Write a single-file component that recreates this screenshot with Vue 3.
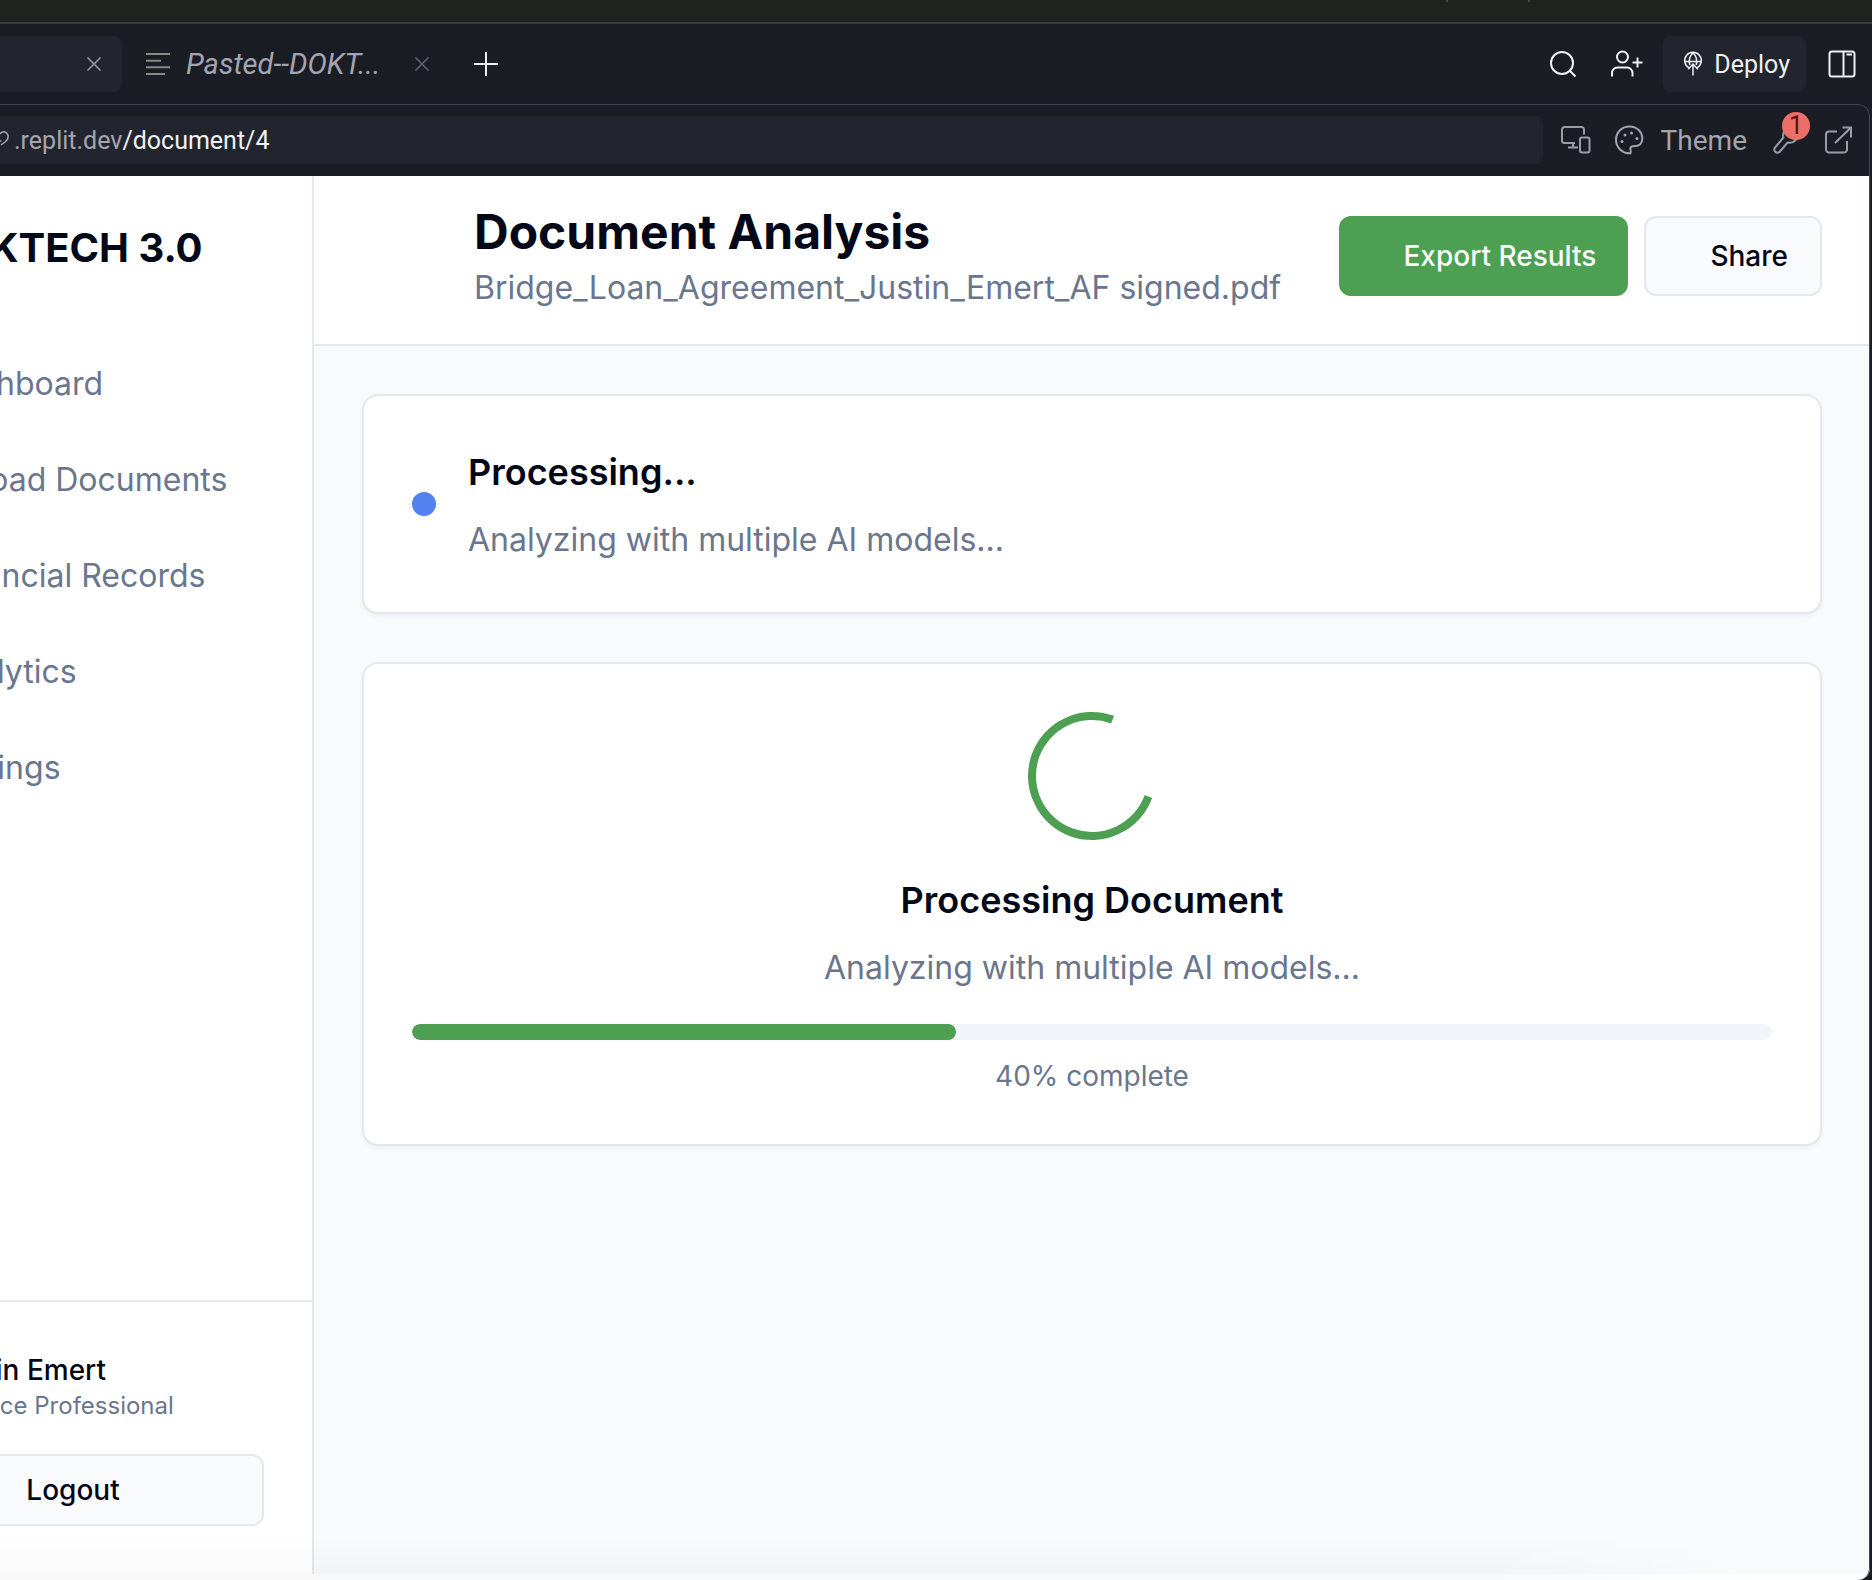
<script setup>
import { ref } from 'vue'

const progress = ref(40)
const statusText = 'Analyzing with multiple AI models...'
const navItems = ['Dashboard', 'Upload Documents', 'Financial Records', 'Analytics', 'Settings']
</script>

<template>
  <div class="app">
    <div class="window-strip"><i></i><i></i></div>

    <header class="tabbar">
      <div class="tab active">
        <button class="bare" aria-label="Close tab">
          <svg width="14" height="14" viewBox="0 0 14 14"><path d="M0.5 0.5l13 13M13.5 0.5l-13 13" /></svg>
        </button>
      </div>
      <div class="tab pasted">
        <svg class="file-icon" width="24" height="24" viewBox="0 0 24 24"><path d="M0 2h24M0 8.700h15M0 15.300h24M0 22h19" /></svg>
        <span class="tab-title">Pasted--DOKT...</span>
        <button class="bare dim" aria-label="Close tab">
          <svg width="14" height="14" viewBox="0 0 14 14"><path d="M0.500 0.500l13 13M13.500 0.500l-13 13" /></svg>
        </button>
      </div>
      <button class="bare bright" aria-label="New tab">
        <svg class="thick" width="24" height="24" viewBox="0 0 24 24"><path d="M12 0v24M0 12h24" /></svg>
      </button>
      <div class="tab-actions">
        <button class="bare bright search" aria-label="Search">
          <svg class="thick" width="26" height="26" viewBox="0 0 26 26"><circle cx="12" cy="12" r="11" /><path d="M19.800 19.800l5.700 5.700" /></svg>
        </button>
        <button class="bare bright invite" aria-label="Invite">
          <svg class="thick" width="32" height="28" viewBox="0 0 32 28"><circle cx="11.500" cy="7" r="5.500" /><path d="M1 26.500v-3.500a5.500 5.500 0 0 1 5.500-5.500h9.500a5.500 5.500 0 0 1 5.500 5.500v3.500M26.500 7.500v10M21.500 12.500h10" /></svg>
        </button>
        <button class="deploy">
          <svg width="18" height="24" viewBox="0 0 18 24"><path d="M5 15.800A8.300 8.300 0 1 1 13 15.800M1 9.500h16M9 1C4.500 5 5 10 5.800 13M9 1C13.500 5 13 10 12.200 13M9 23.500V12M4.200 17.200L9 12l4.800 5.200" /></svg>
          Deploy
        </button>
        <button class="bare bright" aria-label="Toggle panel">
          <svg class="thick" width="28" height="28" viewBox="0 0 28 28"><rect x="1.500" y="1.500" width="25" height="25" rx="2.500" /><path d="M15.500 1.500v25M18.500 4.500h5.500" /></svg>
        </button>
      </div>
    </header>

    <section class="pane">
      <div class="toolbar">
        <button class="address" aria-label="Address">
          <svg width="9" height="18" viewBox="0 0 9 18"><path d="M0 3C2 0 5 0 7 2.500S8.500 8 5 11L1 14M0 10.500l1.500-1" /></svg>
          <span><span class="host">.replit.dev</span>/document/4</span>
        </button>
        <button class="bare" aria-label="Devices">
          <svg class="thick" width="30" height="28" viewBox="0 0 30 28"><path d="M14 17H3.500a2.500 2.500 0 0 1-2.500-2.500v-11A2.500 2.500 0 0 1 3.500 1h17A2.500 2.500 0 0 1 23 3.500v5M12 17v4.500M7 21.500h10" /><rect x="19" y="11.500" width="9.500" height="15" rx="2" /></svg>
        </button>
        <button class="theme">
          <svg class="thick" width="28" height="30" viewBox="0 0 28 30"><path d="M15.500 28.300C7 28.800 1 22 1 15 1 7 7 1.500 14.500 1.500S27.300 7 27.300 13.500c0 5-3 7.500-6.800 7.500-4 0-6 1-5 4 .5 1.500.4 2.600 0 3.300z" /><g class="spots"><circle cx="7" cy="16.500" r="1.500" /><circle cx="10" cy="10" r="1.500" /><circle cx="16.500" cy="8" r="1.500" /><circle cx="22" cy="13.500" r="1.500" /></g></svg>
          Theme
        </button>
        <button class="bare tools" aria-label="Dev tools">
          <svg class="thick" width="28" height="28" viewBox="0 0 28 28"><path d="M10.500 11.500C9 6 13 1 19 1.500l-3.500 4v5h5l4.500-4c1 6-4 11.500-10.500 10L7 25.500c-1.500 1.500-3.500 1.500-4.800.2s-1.200-3.500.3-4.700z" /></svg>
          <span class="badge">1</span>
        </button>
        <a class="bare" href="#" aria-label="Open in new window">
          <svg class="thick" width="27" height="28" viewBox="0 0 27 28"><path d="M12 5.500H4A3 3 0 0 0 1 8.500v15a3 3 0 0 0 3 3h15a3 3 0 0 0 3-3V15M10 17L26 1.500M17.500 1.500H26v10" /></svg>
        </a>
      </div>

      <div class="page">
        <aside class="sidebar">
          <h2 class="brand">DOKTECH 3.0</h2>
          <nav>
            <a v-for="item in navItems" :key="item" href="#">{{ item }}</a>
          </nav>
          <div class="account">
            <div class="profile">
              <strong>Justin Emert</strong>
              <span>Finance Professional</span>
            </div>
            <button class="btn logout">Logout</button>
          </div>
        </aside>

        <div class="content">
          <header class="page-header">
            <div class="titles">
              <h1>Document Analysis</h1>
              <p>Bridge_Loan_Agreement_Justin_Emert_AF signed.pdf</p>
            </div>
            <div class="header-actions">
              <button class="btn primary">Export Results</button>
              <button class="btn">Share</button>
            </div>
          </header>

          <main>
            <section class="card status">
              <i class="dot"></i>
              <div>
                <h3>Processing...</h3>
                <p>{{ statusText }}</p>
              </div>
            </section>

            <section class="card job">
              <div class="spinner"></div>
              <h3>Processing Document</h3>
              <p>{{ statusText }}</p>
              <div class="track" role="progressbar" :aria-valuenow="progress" aria-valuemin="0" aria-valuemax="100">
                <div class="fill" :style="{ width: progress + '%' }"></div>
              </div>
              <small>{{ progress }}% complete</small>
            </section>
          </main>
        </div>
      </div>
      <div class="page-edge"></div>
    </section>
  </div>
</template>

<style>
body {
  margin: 0;
  background: #1b1d25;
}
</style>

<style scoped>
* {
  box-sizing: border-box;
}

h1, h2, h3, p {
  margin: 0;
}

button {
  font: inherit;
  cursor: pointer;
}

svg {
  display: block;
  flex: none;
  overflow: visible;
  fill: none;
  stroke: currentColor;
  stroke-width: 1.5;
}

svg.thick {
  stroke-width: 2;
}

.app {
  display: flex;
  flex-direction: column;
  min-height: 100vh;
  overflow: hidden;
  background: #1b1d25;
  color: #020817;
  font-family: Inter, sans-serif;
}

.window-strip {
  display: flex;
  justify-content: flex-end;
  gap: 80px;
  height: 24px;
  padding-right: 342px;
  background: #202220;
  border-bottom: 2px solid #3b3c3f;
}

.window-strip i {
  width: 2px;
  height: 2px;
  background: #454745;
}

.tabbar,
.toolbar {
  display: flex;
  align-items: center;
  color: #a3a6b0;
  font-family: Roboto, sans-serif;
}

.tabbar {
  height: 80px;
  padding-right: 16px;
}

.bare {
  display: block;
  flex: none;
  padding: 0;
  border: 0;
  background: none;
  color: #9a9da8;
}

.bare.dim {
  color: #62656f;
}

.bare.bright {
  color: #eef0f4;
}

.tab {
  display: flex;
  align-items: center;
  height: 56px;
}

.tab.active {
  justify-content: flex-end;
  width: 122px;
  padding-right: 21px;
  border-radius: 0 8px 8px 0;
  background: #23252e;
}

.tab.pasted {
  width: 352px;
  padding: 0 45px 0 24px;
}

.file-icon {
  color: #8b8781;
  stroke-width: 2;
}

.tab-title {
  flex: 1;
  margin-left: 16px;
  font-size: 29px;
  font-style: italic;
  white-space: nowrap;
}

.tab-actions {
  display: flex;
  align-items: center;
  margin-left: auto;
}

.search {
  margin-right: 35px;
}

.invite {
  margin-right: 20px;
}

.deploy {
  display: flex;
  align-items: center;
  gap: 12px;
  height: 56px;
  margin-right: 22px;
  padding: 0 16px 0 21px;
  border: 0;
  border-radius: 8px;
  background: #23252e;
  color: #eef0f4;
  font-size: 25px;
}

.pane {
  position: relative;
  display: flex;
  flex: 1;
  flex-direction: column;
  margin-right: 2px;
  overflow: hidden;
  border-radius: 0 12px 12px 0;
}

.pane::after {
  content: '';
  position: absolute;
  inset: 0;
  border: 1px solid #464851;
  border-width: 1px 1px 0 0;
  border-radius: 0 12px 12px 0;
  pointer-events: none;
}

.toolbar {
  flex: none;
  height: 72px;
  padding-right: 18px;
}

.address {
  display: flex;
  flex: 1;
  align-items: center;
  gap: 5px;
  height: 48px;
  margin-right: 18px;
  padding: 0;
  border: 0;
  border-radius: 0 8px 8px 0;
  background: #23252e;
  color: #eef0f4;
  font-size: 25px;
}

.host,
.address svg {
  color: #a3a6b0;
}

.theme {
  display: flex;
  align-items: center;
  gap: 18px;
  margin: 0 26px 0 24px;
  padding: 0;
  border: 0;
  background: none;
  color: #a3a6b0;
  font-size: 28px;
}

.spots {
  fill: currentColor;
  stroke: none;
}

.tools {
  position: relative;
  margin-right: 24px;
}

.badge {
  position: absolute;
  top: -14px;
  left: 9px;
  width: 28px;
  height: 28px;
  border-radius: 50%;
  background: #ee6f69;
  color: #5c0f0f;
  font-size: 25px;
  line-height: 28px;
  text-align: center;
}

.page {
  display: flex;
  flex: 1;
  background: #f9fafc;
}

.page-edge {
  position: relative;
  height: 6px;
  background: linear-gradient(90deg, #f9f9f9 80%, #fff 95%);
}

.page-edge::before {
  content: '';
  position: absolute;
  right: 120px;
  bottom: 6px;
  left: 0;
  height: 36px;
  background: linear-gradient(rgba(0, 0, 0, 0), rgba(0, 0, 0, 0.024));
  -webkit-mask-image: linear-gradient(90deg, #000 85%, transparent);
  mask-image: linear-gradient(90deg, #000 85%, transparent);
}

.sidebar {
  display: flex;
  flex: none;
  flex-direction: column;
  width: 512px;
  margin-left: -198px;
  background: #fff;
  border-right: 2px solid #e3e8ef;
}

.brand {
  padding: 44px 48px 44px 128px;
  font-size: 40px;
  font-weight: 700;
  line-height: 56px;
}

nav {
  display: flex;
  flex-direction: column;
  gap: 16px;
  padding: 24px 32px;
}

nav a {
  padding: 16px 16px 16px 104px;
  color: #6a768e;
  font-size: 32px;
  line-height: 48px;
  text-decoration: none;
  white-space: nowrap;
}

.account {
  display: flex;
  flex-direction: column;
  gap: 32px;
  margin-top: auto;
  padding: 48px;
  border-top: 2px solid #e3e8ef;
}

.profile {
  display: flex;
  flex-direction: column;
  padding-left: 88px;
}

.profile strong {
  font-size: 28px;
  font-weight: 500;
  line-height: 40px;
}

.profile span {
  color: #6a768e;
  font-size: 24px;
  line-height: 32px;
}

.btn {
  height: 80px;
  padding: 0 32px 0 64px;
  border: 2px solid #e3e8ef;
  border-radius: 12px;
  background: #f9fafc;
  color: #020817;
  font-size: 28px;
  font-weight: 500;
  white-space: nowrap;
}

.btn.primary {
  border: 0;
  background: #4d9f52;
  color: #f9fafc;
}

.btn.logout {
  height: 72px;
}

.content {
  flex: 1;
  min-width: 0;
}

.page-header {
  display: flex;
  align-items: center;
  justify-content: space-between;
  height: 170px;
  padding: 24px 48px 32px 160px;
  background: #fff;
  border-bottom: 2px solid #e3e8ef;
}

h1 {
  font-size: 48px;
  font-weight: 700;
  line-height: 64px;
}

p {
  color: #6a768e;
  font-size: 32px;
  line-height: 48px;
  white-space: nowrap;
}

.header-actions {
  display: flex;
  gap: 16px;
}

main {
  display: flex;
  flex-direction: column;
  gap: 48px;
  padding: 48px;
}

.card {
  padding: 48px;
  border: 2px solid #e3e8ef;
  border-radius: 16px;
  background: #fff;
  box-shadow: 0 2px 4px rgba(0, 0, 0, 0.05);
}

.card h3 {
  margin-bottom: 16px;
  font-size: 36px;
  font-weight: 600;
  line-height: 56px;
}

.status {
  display: flex;
  align-items: center;
  gap: 32px;
}

.dot {
  width: 24px;
  height: 24px;
  border-radius: 50%;
  background: #5182ef;
}

.job {
  display: flex;
  flex-direction: column;
  align-items: center;
}

.spinner {
  width: 128px;
  height: 128px;
  margin-bottom: 32px;
  border: 8px solid #4d9f52;
  border-top-color: transparent;
  border-radius: 50%;
  transform: rotate(65deg);
}

.track {
  align-self: stretch;
  height: 16px;
  margin: 32px 0 16px;
  overflow: hidden;
  border-radius: 8px;
  background: #f1f4f8;
}

.fill {
  height: 100%;
  border-radius: 8px;
  background: #4d9f52;
}

small {
  color: #6a768e;
  font-size: 28px;
  line-height: 40px;
}
</style>
